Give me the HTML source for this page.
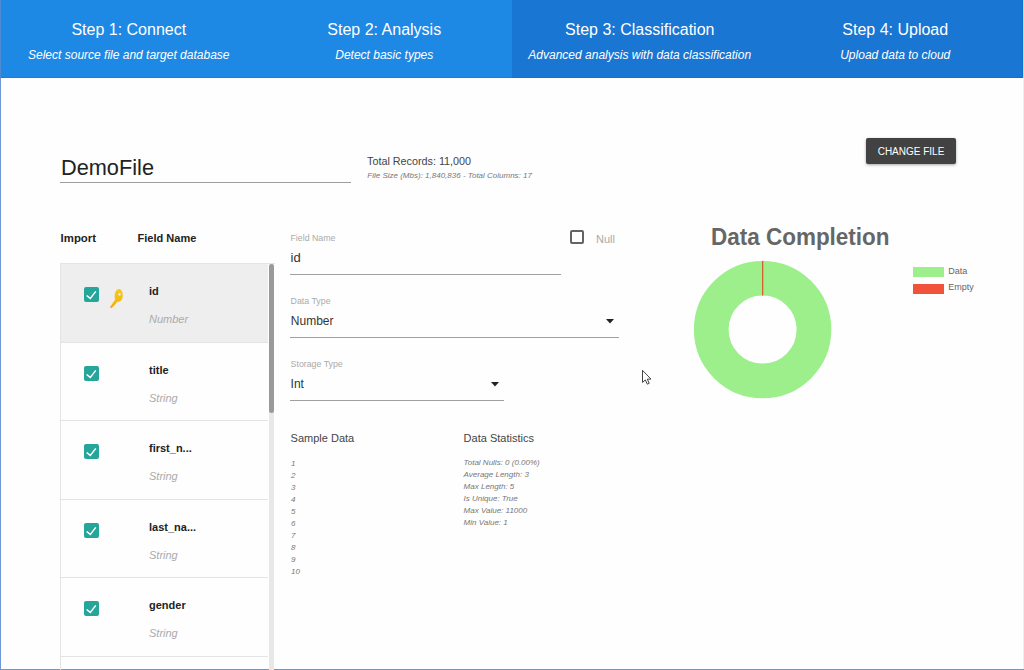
<!DOCTYPE html>
<html><head><meta charset="utf-8"><title>Import</title>
<style>
html,body{margin:0;padding:0;}
body{width:1024px;height:670px;overflow:hidden;position:relative;background:#fefefe;font-family:"Liberation Sans",sans-serif;}
.t{position:absolute;white-space:nowrap;line-height:1;}
.r{position:absolute;}
</style></head><body>
<div class="r" style="left:1px;top:0px;width:511px;height:78px;background:#1e88e5;"></div>
<div class="r" style="left:512px;top:0px;width:511px;height:78px;background:#1976d2;"></div>
<div class="r" style="left:1px;top:77px;width:1022px;height:1px;background:rgba(0,60,140,0.12);"></div>
<div class="t" style="left:1.25px;width:255px;text-align:center;top:21.66px;font-size:16px;color:#fff;">Step 1: Connect</div>
<div class="t" style="left:1.25px;width:255px;text-align:center;top:48.74px;font-size:12px;font-style:italic;color:#fff;">Select source file and target database</div>
<div class="t" style="left:256.75px;width:255px;text-align:center;top:21.66px;font-size:16px;color:#fff;">Step 2: Analysis</div>
<div class="t" style="left:256.75px;width:255px;text-align:center;top:48.74px;font-size:12px;font-style:italic;color:#fff;">Detect basic types</div>
<div class="t" style="left:512.25px;width:255px;text-align:center;top:21.66px;font-size:16px;color:#fff;">Step 3: Classification</div>
<div class="t" style="left:512.25px;width:255px;text-align:center;top:48.74px;font-size:12px;font-style:italic;color:#fff;">Advanced analysis with data classification</div>
<div class="t" style="left:767.75px;width:255px;text-align:center;top:21.66px;font-size:16px;color:#fff;">Step 4: Upload</div>
<div class="t" style="left:767.75px;width:255px;text-align:center;top:48.74px;font-size:12px;font-style:italic;color:#fff;">Upload data to cloud</div>
<div class="r" style="left:0px;top:0px;width:1px;height:670px;background:#6d97d6;"></div>
<div class="r" style="left:0px;top:0px;width:1px;height:78px;background:#4f8ad0;"></div>
<div class="r" style="left:0px;top:669px;width:1024px;height:1px;background:#6b96d6;"></div>
<div class="r" style="left:1023px;top:78px;width:1px;height:591px;background:#eeeeee;"></div>
<div class="r" style="left:1023px;top:0px;width:1px;height:78px;background:#c8d8ec;"></div>
<div class="r" style="left:1022px;top:0px;width:1px;height:78px;background:#136fce;"></div>
<div class="t" style="left:60.60px;top:156.24px;font-size:22.75px;color:#222;transform:scaleX(0.955);transform-origin:0 0;">DemoFile</div>
<div class="r" style="left:60px;top:182px;width:291px;height:1px;background:#9e9e9e;"></div>
<div class="t" style="left:367.00px;top:155.99px;font-size:11px;color:#444;transform:scaleX(0.98);transform-origin:0 0;">Total Records: 11,000</div>
<div class="t" style="left:367.30px;top:171.63px;font-size:8px;font-style:italic;color:#777;">File Size (Mbs): 1,840,836 - Total Columns: 17</div>
<div class="r" style="left:866px;top:138px;width:90px;height:26px;background:#424242;border-radius:2px;box-shadow:0 1px 3px rgba(0,0,0,0.35);"></div>
<div class="t" style="left:866.00px;width:90px;text-align:center;top:146.94px;font-size:10px;color:#fff;">CHANGE FILE</div>
<div class="t" style="left:60.60px;top:232.95px;font-size:11.4px;font-weight:700;color:#222;">Import</div>
<div class="t" style="left:137.60px;top:233.29px;font-size:11px;font-weight:700;color:#222;">Field Name</div>
<div class="r" style="left:60px;top:263px;width:215px;height:1px;background:#e4e4e4;"></div>
<div class="r" style="left:60px;top:263px;width:1px;height:407px;background:#e4e4e4;"></div>
<div class="r" style="left:61px;top:264px;width:207px;height:78px;background:#eeeeee;"></div>
<div class="r" style="left:61px;top:342px;width:207px;height:1px;background:#e4e4e4;"></div>
<div class="r" style="left:61px;top:420px;width:207px;height:1px;background:#e4e4e4;"></div>
<div class="r" style="left:61px;top:499px;width:207px;height:1px;background:#e4e4e4;"></div>
<div class="r" style="left:61px;top:577px;width:207px;height:1px;background:#e4e4e4;"></div>
<div class="r" style="left:61px;top:656px;width:207px;height:1px;background:#e4e4e4;"></div>
<div class="r" style="left:269px;top:264px;width:5px;height:406px;background:#e8e8e8;"></div>
<div class="r" style="left:269px;top:264px;width:5px;height:149px;background:#9a9a9a;border-radius:3px 3px 3px 3px;"></div>
<div class="r" style="left:84px;top:287px;width:15px;height:15px;background:#26a69a;border-radius:2px;"><svg width="15" height="15" viewBox="0 0 15 15" style="position:absolute;left:0;top:0"><path d="M2.6 8.5 L6.3 11.4 L11.8 4.4" fill="none" stroke="#fff" stroke-width="1.45"/></svg></div>
<div class="t" style="left:149.00px;top:286.09px;font-size:11px;font-weight:700;color:#222;">id</div>
<div class="t" style="left:149.00px;top:313.89px;font-size:11px;font-style:italic;color:#aaa;">Number</div>
<div class="r" style="left:84px;top:366px;width:15px;height:15px;background:#26a69a;border-radius:2px;"><svg width="15" height="15" viewBox="0 0 15 15" style="position:absolute;left:0;top:0"><path d="M2.6 8.5 L6.3 11.4 L11.8 4.4" fill="none" stroke="#fff" stroke-width="1.45"/></svg></div>
<div class="t" style="left:149.00px;top:365.09px;font-size:11px;font-weight:700;color:#222;">title</div>
<div class="t" style="left:149.00px;top:392.89px;font-size:11px;font-style:italic;color:#aaa;">String</div>
<div class="r" style="left:84px;top:444px;width:15px;height:15px;background:#26a69a;border-radius:2px;"><svg width="15" height="15" viewBox="0 0 15 15" style="position:absolute;left:0;top:0"><path d="M2.6 8.5 L6.3 11.4 L11.8 4.4" fill="none" stroke="#fff" stroke-width="1.45"/></svg></div>
<div class="t" style="left:149.00px;top:443.09px;font-size:11px;font-weight:700;color:#222;">first_n...</div>
<div class="t" style="left:149.00px;top:470.89px;font-size:11px;font-style:italic;color:#aaa;">String</div>
<div class="r" style="left:84px;top:523px;width:15px;height:15px;background:#26a69a;border-radius:2px;"><svg width="15" height="15" viewBox="0 0 15 15" style="position:absolute;left:0;top:0"><path d="M2.6 8.5 L6.3 11.4 L11.8 4.4" fill="none" stroke="#fff" stroke-width="1.45"/></svg></div>
<div class="t" style="left:149.00px;top:522.09px;font-size:11px;font-weight:700;color:#222;">last_na...</div>
<div class="t" style="left:149.00px;top:549.89px;font-size:11px;font-style:italic;color:#aaa;">String</div>
<div class="r" style="left:84px;top:601px;width:15px;height:15px;background:#26a69a;border-radius:2px;"><svg width="15" height="15" viewBox="0 0 15 15" style="position:absolute;left:0;top:0"><path d="M2.6 8.5 L6.3 11.4 L11.8 4.4" fill="none" stroke="#fff" stroke-width="1.45"/></svg></div>
<div class="t" style="left:149.00px;top:600.09px;font-size:11px;font-weight:700;color:#222;">gender</div>
<div class="t" style="left:149.00px;top:627.89px;font-size:11px;font-style:italic;color:#aaa;">String</div>
<svg class="r" style="left:80px;top:282px" width="48" height="30" viewBox="0 0 1024 640">
<defs><linearGradient id="kg" x1="0" y1="0" x2="0" y2="1"><stop offset="0" stop-color="#f7c91c"/><stop offset="0.6" stop-color="#f4bb12"/><stop offset="1" stop-color="#f0a40a"/></linearGradient></defs>
<path d="M755 395 C728 330 735 205 790 165 C845 125 905 170 912 265 C918 350 885 410 825 420 L800 422 L708 520 L690 540 Q670 565 650 548 Q635 530 655 510 L700 460 L690 445 L715 430 L745 380 Z" fill="url(#kg)"/>
<ellipse cx="843" cy="262" rx="24" ry="30" fill="#eeeeee"/>
</svg>
<div class="t" style="left:290.50px;top:233.95px;font-size:8.8px;color:#aaa;">Field Name</div>
<div class="t" style="left:290.60px;top:251.40px;font-size:13px;color:#333;">id</div>
<div class="r" style="left:290px;top:274px;width:271px;height:1px;background:#a0a0a0;"></div>
<div class="r" style="left:570px;top:230px;width:14px;height:14px;background:transparent;box-sizing:border-box;border:2px solid #646464;border-radius:2px;"></div>
<div class="t" style="left:596.00px;top:234.29px;font-size:11px;color:#aaa;">Null</div>
<div class="t" style="left:290.60px;top:296.95px;font-size:8.8px;color:#aaa;">Data Type</div>
<div class="t" style="left:290.80px;top:314.84px;font-size:12px;color:#333;">Number</div>
<svg class="r" style="left:606px;top:319px" width="8" height="4.5" viewBox="0 0 8 4.5"><path d="M0 0 L8 0 L4 4.5 Z" fill="#222"/></svg>
<div class="r" style="left:290px;top:337px;width:329px;height:1px;background:#a0a0a0;"></div>
<div class="t" style="left:290.60px;top:359.85px;font-size:8.8px;color:#aaa;">Storage Type</div>
<div class="t" style="left:290.60px;top:377.74px;font-size:12px;color:#333;">Int</div>
<svg class="r" style="left:491px;top:382px" width="8" height="4.5" viewBox="0 0 8 4.5"><path d="M0 0 L8 0 L4 4.5 Z" fill="#222"/></svg>
<div class="r" style="left:290px;top:400px;width:214px;height:1px;background:#a0a0a0;"></div>
<div class="t" style="left:290.60px;top:432.89px;font-size:11px;color:#444;">Sample Data</div>
<div class="t" style="left:291.00px;top:459.53px;font-size:8px;font-style:italic;color:#777;">1</div>
<div class="t" style="left:291.00px;top:471.53px;font-size:8px;font-style:italic;color:#777;">2</div>
<div class="t" style="left:291.00px;top:483.53px;font-size:8px;font-style:italic;color:#777;">3</div>
<div class="t" style="left:291.00px;top:495.53px;font-size:8px;font-style:italic;color:#777;">4</div>
<div class="t" style="left:291.00px;top:507.53px;font-size:8px;font-style:italic;color:#777;">5</div>
<div class="t" style="left:291.00px;top:519.53px;font-size:8px;font-style:italic;color:#777;">6</div>
<div class="t" style="left:291.00px;top:531.53px;font-size:8px;font-style:italic;color:#777;">7</div>
<div class="t" style="left:291.00px;top:543.53px;font-size:8px;font-style:italic;color:#777;">8</div>
<div class="t" style="left:291.00px;top:555.53px;font-size:8px;font-style:italic;color:#777;">9</div>
<div class="t" style="left:291.00px;top:567.53px;font-size:8px;font-style:italic;color:#777;">10</div>
<div class="t" style="left:463.60px;top:432.89px;font-size:11px;color:#444;">Data Statistics</div>
<div class="t" style="left:463.60px;top:459.33px;font-size:8px;font-style:italic;color:#777;">Total Nulls: 0 (0.00%)</div>
<div class="t" style="left:463.60px;top:471.33px;font-size:8px;font-style:italic;color:#777;">Average Length: 3</div>
<div class="t" style="left:463.60px;top:483.33px;font-size:8px;font-style:italic;color:#777;">Max Length: 5</div>
<div class="t" style="left:463.60px;top:495.33px;font-size:8px;font-style:italic;color:#777;">Is Unique: True</div>
<div class="t" style="left:463.60px;top:507.33px;font-size:8px;font-style:italic;color:#777;">Max Value: 11000</div>
<div class="t" style="left:463.60px;top:519.33px;font-size:8px;font-style:italic;color:#777;">Min Value: 1</div>
<div class="t" style="left:710.50px;top:225.53px;font-size:23px;font-weight:700;color:#666;transform:scaleX(0.977);transform-origin:0 0;">Data Completion</div>
<svg class="r" style="left:0;top:0" width="1024" height="670" viewBox="0 0 1024 670">
<circle cx="762.6" cy="329.6" r="51.35" fill="none" stroke="#9cef8b" stroke-width="34.7"/>
<rect x="762.0" y="260.90000000000003" width="1.3" height="34.7" fill="#d5602f"/>
</svg>
<div class="r" style="left:913px;top:267px;width:31px;height:10px;background:#9cef8b;"></div>
<div class="r" style="left:913px;top:283.5px;width:31px;height:10px;background:#f1533a;"></div>
<div class="t" style="left:948.20px;top:266.68px;font-size:9px;color:#666;">Data</div>
<div class="t" style="left:948.20px;top:282.98px;font-size:9px;color:#666;">Empty</div>
<svg class="r" style="left:641px;top:369px" width="12" height="17" viewBox="0 0 12 17">
<path d="M1.5 1.3 L1.5 13.5 L4.3 10.9 L6.3 15.2 L8.2 14.3 L6.3 10.1 L10 10.1 Z" fill="#fff" stroke="#444" stroke-width="1" stroke-linejoin="round"/>
</svg>
</body></html>
